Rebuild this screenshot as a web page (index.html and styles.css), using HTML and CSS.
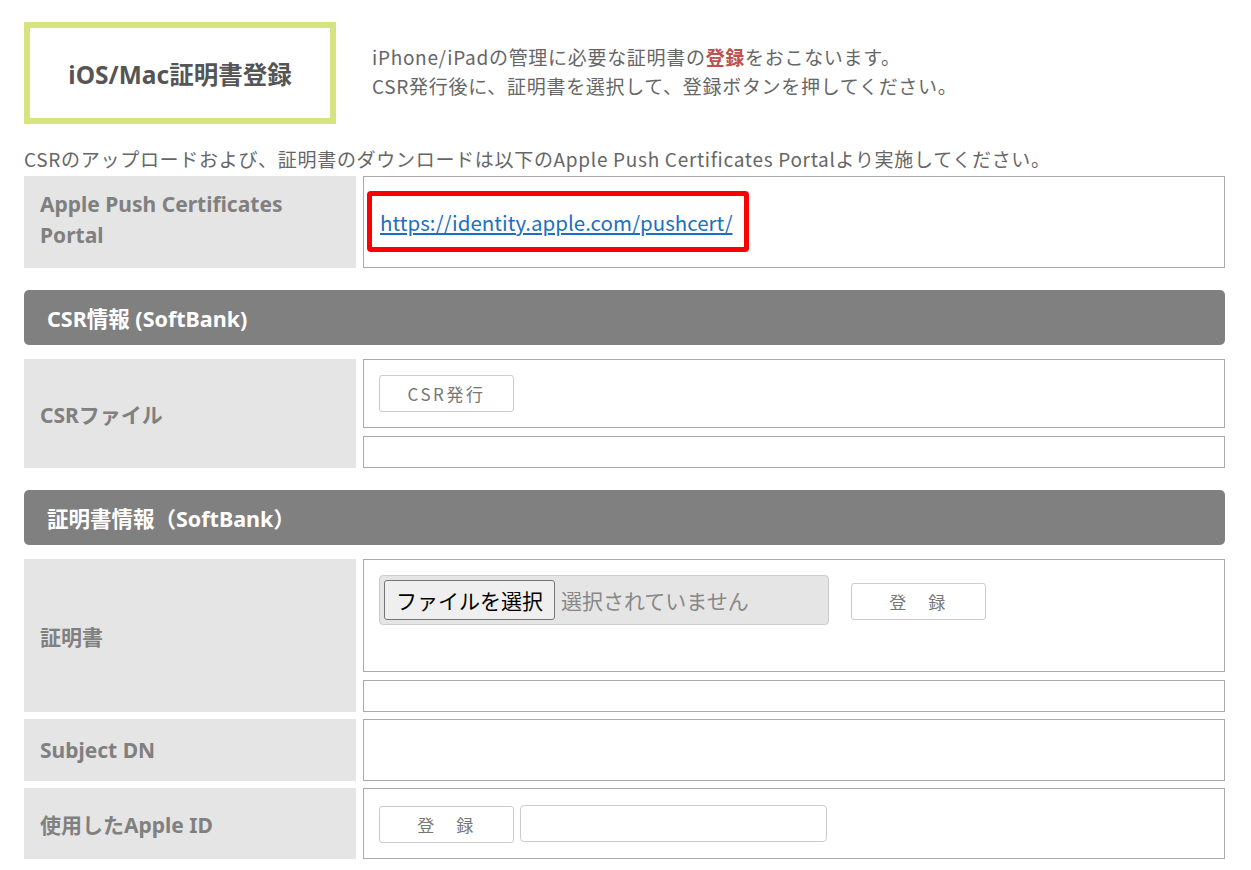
FILE: index.html
```html
<!DOCTYPE html>
<html lang="ja">
<head>
    <meta charset="UTF-8">
    <meta name="viewport" content="width=device-width, initial-scale=1.0">
    <title>iOS/Mac証明書登録</title>
    <link rel="stylesheet" href="styles.css">
</head>
<body>
    <div class="page">
        <div class="top">
            <div class="title-box">iOS/Mac証明書登録</div>
            <div class="lead">
                <p>iPhone/iPadの管理に必要な証明書の<strong class="em">登録</strong>をおこないます。</p>
                <p>CSR発行後に、証明書を選択して、登録ボタンを押してください。</p>
            </div>
        </div>

        <p class="note">CSRのアップロードおよび、証明書のダウンロードは以下のApple Push Certificates Portalより実施してください。</p>

        <div class="grid">
            <div class="label portal-label">Apple Push Certificates<br>Portal</div>
            <div class="value portal-value">
                <div class="link-box">
                    <a href="#" class="link">https://identity.apple.com/pushcert/</a>
                </div>
            </div>
        </div>

        <div class="section-head">CSR情報 (SoftBank)</div>

        <div class="grid">
            <div class="label csr-label">CSRファイル</div>
            <div class="value-stack">
                <div class="value csr-value">
                    <button type="button" class="btn">CSR発行</button>
                </div>
                <div class="value value-thin"></div>
            </div>
        </div>

        <div class="section-head">証明書情報（SoftBank）</div>

        <div class="grid">
            <div class="label cert-label">証明書</div>
            <div class="value-stack">
                <div class="value cert-value">
                    <div class="file-field">
                        <span class="file-btn">ファイルを選択</span>
                        <span class="file-name">選択されていません</span>
                    </div>
                    <button type="button" class="btn btn-register">登　録</button>
                </div>
                <div class="value value-thin"></div>
            </div>

            <div class="label dn-label">Subject DN</div>
            <div class="value dn-value"></div>

            <div class="label id-label">使用したApple ID</div>
            <div class="value id-value">
                <button type="button" class="btn">登　録</button>
                <input type="text" class="text-input">
            </div>
        </div>
    </div>
</body>
</html>
```

FILE: styles.css
```css
body {
    margin: 0;
    font-family: "Noto Sans CJK JP", "Noto Sans", sans-serif;
    color: #666;
    background-color: #fff;
}

p {
    margin: 0;
}

.page {
    width: 1201px;
    margin-left: 24px;
    padding-top: 22px;
}

.top {
    display: flex;
    align-items: flex-start;
}

.title-box {
    width: 300px;
    height: 90px;
    border: 6px solid #d5e47f;
    display: flex;
    align-items: center;
    justify-content: center;
    font-family: "Noto Sans", "Noto Sans CJK JP", sans-serif;
    font-weight: bold;
    font-size: 24.5px;
    color: #555;
    flex-shrink: 0;
}

.lead {
    margin-left: 36px;
    padding-top: 20px;
    font-size: 19px;
    letter-spacing: 0.7px;
    line-height: 29px;
}

.em {
    color: #c0504d;
}

.note {
    margin-top: 20px;
    font-size: 19px;
    letter-spacing: 0.7px;
    line-height: 30px;
    margin-bottom: 2px;
}

.grid {
    display: grid;
    grid-template-columns: 332px 1fr;
    column-gap: 7px;
    row-gap: 7px;
}

.label {
    background-color: #e5e5e5;
    color: #808080;
    font-family: "Noto Sans", "Noto Sans CJK JP", sans-serif;
    font-weight: bold;
    font-size: 21px;
    padding-left: 16px;
    display: flex;
    align-items: center;
}

.portal-label {
    align-items: flex-start;
    padding-top: 13px;
    line-height: 31px;
    height: 79px;
}

.value {
    border: 1px solid #aaa;
    box-sizing: border-box;
    background-color: #fff;
}

.value-stack {
    display: flex;
    flex-direction: column;
    gap: 8px;
}

.value-thin {
    height: 32px;
}

.portal-value {
    height: 92px;
    padding: 14px 0 0 3px;
}

.link-box {
    width: 382px;
    height: 61px;
    box-sizing: border-box;
    border: 5px solid #f00;
    border-radius: 4px;
    padding-left: 8px;
    display: flex;
    align-items: center;
}

.link {
    color: #1a6fc0;
    font-size: 20.5px;
    text-decoration: underline;
}

.section-head {
    margin: 22px 0 14px;
    height: 55px;
    background-color: #808080;
    border-radius: 5px;
    color: #fff;
    font-family: "Noto Sans", "Noto Sans CJK JP", sans-serif;
    font-weight: bold;
    font-size: 21.5px;
    padding-left: 23px;
    display: flex;
    align-items: center;
}

.csr-value {
    height: 69px;
    padding: 15px 0 0 15px;
}

.btn {
    width: 135px;
    height: 37px;
    border: 1px solid #ccc;
    border-radius: 3px;
    background-color: #fff;
    color: #777;
    font-family: "Noto Sans CJK JP", sans-serif;
    font-size: 17px;
    letter-spacing: 2.5px;
    padding: 0;
}

.cert-value {
    height: 113px;
    padding: 15px 0 0 15px;
    display: flex;
    align-items: flex-start;
}

.file-field {
    width: 450px;
    height: 50px;
    box-sizing: border-box;
    background-color: #e5e5e5;
    border: 1px solid #ccc;
    border-radius: 4px;
    display: flex;
    align-items: center;
    padding-left: 4px;
}

.file-btn {
    height: 40px;
    box-sizing: border-box;
    border: 1px solid #767676;
    border-radius: 3px;
    background-color: #efefef;
    color: #000;
    font-size: 21px;
    padding: 0 11px;
    display: flex;
    align-items: center;
}

.file-name {
    color: #888;
    font-size: 21px;
    margin-left: 6px;
}

.btn-register {
    margin: 8px 0 0 22px;
}

.dn-value {
    height: 62px;
}

.id-value {
    height: 71px;
    padding: 16px 0 0 15px;
    display: flex;
    align-items: flex-start;
    gap: 6px;
}

.id-value .btn {
    margin-top: 1px;
}

.text-input {
    width: 307px;
    height: 37px;
    box-sizing: border-box;
    border: 1px solid #ccc;
    border-radius: 4px;
    background-color: #fff;
}
```
